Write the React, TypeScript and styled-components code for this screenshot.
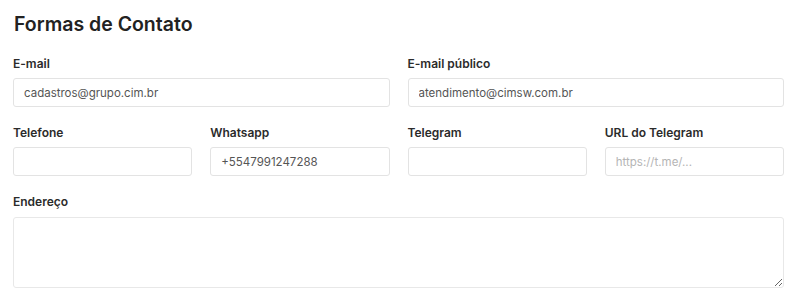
import styled, { createGlobalStyle } from 'styled-components';

const Global = createGlobalStyle`
  body {
    margin: 0;
    background: #fff;
    font-family: Inter, "Noto Sans", sans-serif;
  }
`

export default () => {
    return (
        <Page>
            <Global />
            <Title>Formas de Contato</Title>
            <Grid>
                <Field $span={2}>
                    <Label>E-mail</Label>
                    <Input defaultValue="cadastros@grupo.cim.br" />
                </Field>
                <Field $span={2}>
                    <Label>E-mail público</Label>
                    <Input defaultValue="atendimento@cimsw.com.br" />
                </Field>
                <Field>
                    <Label>Telefone</Label>
                    <Input />
                </Field>
                <Field>
                    <Label>Whatsapp</Label>
                    <Input defaultValue="+5547991247288" />
                </Field>
                <Field>
                    <Label>Telegram</Label>
                    <Input />
                </Field>
                <Field>
                    <Label>URL do Telegram</Label>
                    <Input placeholder="https://t.me/..." />
                </Field>
                <Field $span={4}>
                    <Label>Endereço</Label>
                    <TextArea />
                </Field>
            </Grid>
        </Page>
    )
}

const Page = styled.div`
  padding: 12px 16px 0 13px;
`

const Title = styled.h2`
  margin: 0 0 20px 1px;
  font-size: 19.5px;
  line-height: 24px;
  font-weight: 600;
  color: #222;
`

const Grid = styled.div`
  display: grid;
  grid-template-columns: repeat(4, 1fr);
  column-gap: 18px;
  row-gap: 18px;
`

const Field = styled.div<{ $span?: number }>`
  grid-column: span ${p => p.$span || 1};
  display: flex;
  flex-direction: column;
  gap: 6px;
`

const Label = styled.label`
  font-size: 12px;
  line-height: 16px;
  font-weight: 600;
  color: #2b2b2b;
`

const Input = styled.input`
  box-sizing: border-box;
  width: 100%;
  height: 29px;
  padding: 0 10px;
  border: 1px solid #e3e3e3;
  border-radius: 3px;
  background: #fff;
  font-family: Inter, "Noto Sans", sans-serif;
  font-size: 11.5px;
  color: #555;
  outline: none;
  &::placeholder {
    color: #b5b5b5;
  }
`

const TextArea = styled.textarea`
  box-sizing: border-box;
  width: 100%;
  height: 71px;
  margin-top: 1px;
  padding: 8px 10px;
  border: 1px solid #e8e8e8;
  border-radius: 3px;
  font-family: Inter, "Noto Sans", sans-serif;
  font-size: 11.5px;
  color: #555;
  outline: none;
`
